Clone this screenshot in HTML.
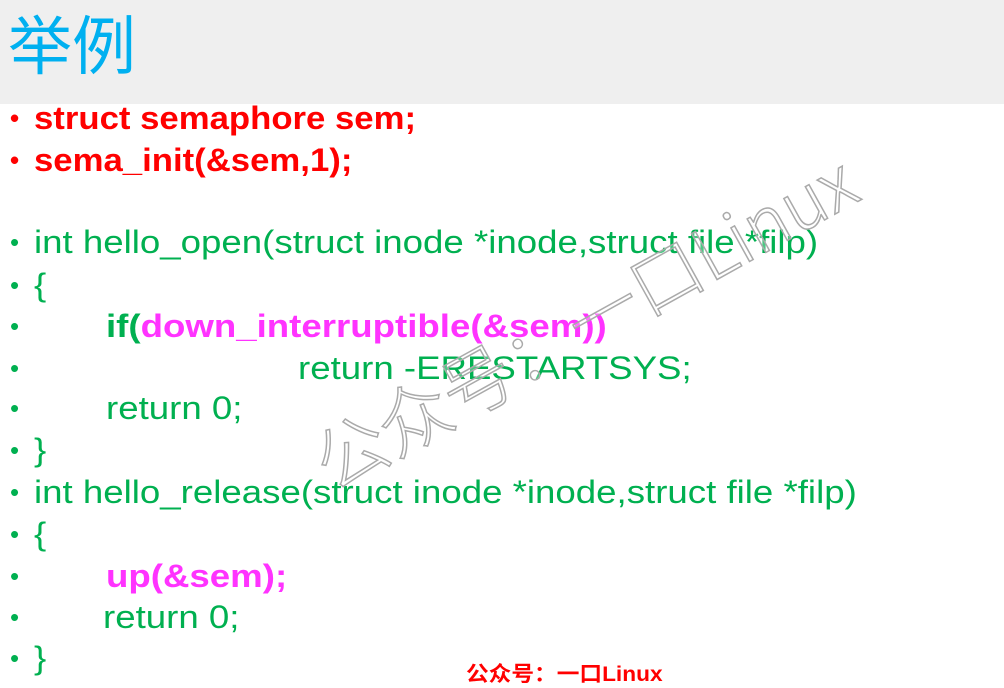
<!DOCTYPE html>
<html><head><meta charset="utf-8"><style>
body{margin:0;width:1004px;height:688px;background:#fff;position:relative;overflow:hidden;font-family:"Liberation Sans","Noto Sans CJK SC",sans-serif}
.hdr{position:absolute;left:0;top:0;width:1004px;height:104px;background:#efefef}
.title{position:absolute;left:8px;top:2px;font-size:64px;line-height:80px;color:#00b0f0;font-family:"Noto Sans CJK SC",sans-serif}
.l{position:absolute;left:0;font-size:32px;line-height:40px;white-space:pre;color:#00b050}
.b{position:absolute;left:10px;font-size:26px}
.t{position:absolute;left:34px;transform:scaleX(1.145);transform-origin:left center}
.r .t{transform:scaleX(1.085)}
.r{color:#ff0000;font-weight:bold}
.m{color:#ff33ff;font-weight:bold}
.wm{position:absolute;left:335px;top:425px;font-size:72px;color:rgba(255,255,255,0.3);-webkit-text-stroke:1.5px #aaa;transform:rotate(-29deg);transform-origin:left bottom;white-space:nowrap;font-family:"Noto Sans CJK SC",sans-serif;font-weight:300;line-height:1}
.ft{position:absolute;left:466px;top:658px;font-size:21px;font-weight:bold;color:#ff0000;transform:scaleX(1.08);transform-origin:left center}
</style></head><body>
<div class="hdr"></div>
<div class="title">举例</div>
<div class="l r" style="top:98px"><span class="b">•</span><span class="t">struct semaphore sem;</span></div>
<div class="l r" style="top:140px"><span class="b">•</span><span class="t">sema_init(&amp;sem,1);</span></div>
<div class="l" style="top:222px"><span class="b">•</span><span class="t">int hello_open(struct inode *inode,struct file *filp)</span></div>
<div class="l" style="top:265px"><span class="b">•</span><span class="t">{</span></div>
<div class="l" style="top:306px"><span class="b">•</span><span class="t" style="left:106px"><b>if(</b><span class="m">down_interruptible(&amp;sem))</span></span></div>
<div class="l" style="top:348px"><span class="b">•</span><span class="t" style="left:298px">return -ERESTARTSYS;</span></div>
<div class="l" style="top:388px"><span class="b">•</span><span class="t" style="left:106px">return 0;</span></div>
<div class="l" style="top:430px"><span class="b">•</span><span class="t">}</span></div>
<div class="l" style="top:472px"><span class="b">•</span><span class="t">int hello_release(struct inode *inode,struct file *filp)</span></div>
<div class="l" style="top:514px"><span class="b">•</span><span class="t">{</span></div>
<div class="l" style="top:556px"><span class="b">•</span><span class="t m" style="left:106px">up(&amp;sem);</span></div>
<div class="l" style="top:597px"><span class="b">•</span><span class="t" style="left:103px">return 0;</span></div>
<div class="l" style="top:638px"><span class="b">•</span><span class="t">}</span></div>
<div class="wm">公众号：一口Linux</div>
<div class="ft">公众号：一口Linux</div>
</body></html>
